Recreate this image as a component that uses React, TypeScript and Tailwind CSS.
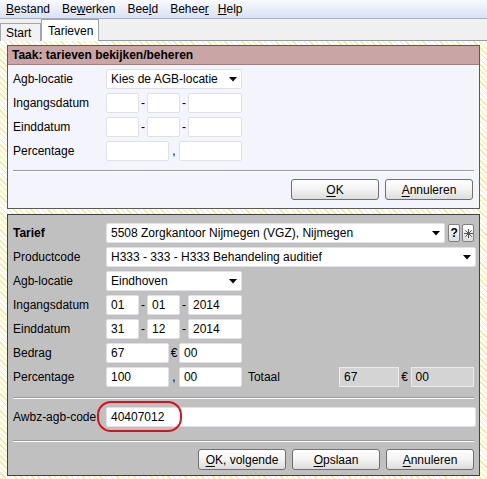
import React from "react";

const TB =
  "h-[20px] bg-white border border-[#e0e0e6] rounded-[2px] pl-[4px] flex items-center shrink-0 leading-none";

function Arrow() {
  return (
    <svg width="8" height="5" viewBox="0 0 8 5" className="shrink-0">
      <path d="M0 0 H8 L4 4.5 Z" fill="#000" />
    </svg>
  );
}

function Select({ w, text }: { w: string; text: string }) {
  return (
    <div className={`${TB} ${w} justify-between pr-[4px]`}>
      <span className="whitespace-nowrap">{text}</span>
      <Arrow />
    </div>
  );
}

function Row({ label, bold, children }: { label: string; bold?: boolean; children?: React.ReactNode }) {
  return (
    <div className="flex items-center h-[20px]">
      <div className={`w-[93px] shrink-0 ${bold ? "font-bold" : ""}`}>{label}</div>
      {children}
    </div>
  );
}

function DateInputs({ a = "", b = "", c = "" }: { a?: string; b?: string; c?: string }) {
  return (
    <div className="flex items-center">
      <div className={`${TB} w-[33px]`}>{a}</div>
      <div className="w-[8px] text-center">-</div>
      <div className={`${TB} w-[33px]`}>{b}</div>
      <div className="w-[8px] text-center">-</div>
      <div className={`${TB} w-[54px]`}>{c}</div>
    </div>
  );
}

function Btn({ w, first, rest }: { w: string; first: string; rest: string }) {
  return (
    <div
      className={`${w} h-[21px] rounded-[3px] border border-[#707070] bg-gradient-to-b from-[#ffffff] via-[#f3f3f3] to-[#dcdcdc] flex items-center justify-center leading-none`}
    >
      <span>
        <span className="underline underline-offset-2">{first}</span>
        {rest}
      </span>
    </div>
  );
}

function Sep() {
  return <div className="border-t border-[#9a9a9a] border-b border-b-white mx-[0px]" />;
}

export default function App() {
  return (
    <div className="relative w-[487px] h-[479px] overflow-hidden text-[12px] text-black font-['Liberation_Sans',Arial,sans-serif] flex flex-col">
      {/* Menu bar */}
      <div className="h-[19px] shrink-0 flex items-center pl-[6px] gap-[12px] bg-gradient-to-b from-[#f8fafd] to-[#d9e2f3] border-b border-[#a8b0bc]">
        <span><span className="underline">B</span>estand</span>
        <span>Be<span className="underline">w</span>erken</span>
        <span>Bee<span className="underline">l</span>d</span>
        <span>Behee<span className="underline">r</span></span>
        <span className="ml-[-3px]"><span className="underline">H</span>elp</span>
      </div>
      {/* Tabs */}
      <div className="h-[22px] shrink-0 bg-[#f0f0f0] border-b border-[#8e9aa6] flex items-end">
        <div className="w-[41px] h-[18px] border border-b-0 border-[#a0a8b0] bg-[#f2f2f2] pl-[5px] flex items-center -mb-px">
          Start
        </div>
        <div className="w-[58px] h-[22px] border border-b-0 border-[#9aa2aa] bg-white pl-[6px] flex items-start pt-[2px] -mb-px relative z-10">
          Tarieven
        </div>
      </div>
      {/* Hatched area */}
      <div className="flex-1 px-[7px] pt-[4px] bg-[repeating-linear-gradient(45deg,#efe9a2_0px,#efe9a2_1px,#fffff6_1px,#fffff6_4px)]">
        {/* Top panel */}
        <div className="h-[164px] border border-[#5a5a5a] bg-[#f4f4fc] flex flex-col">
          <div className="h-[19px] shrink-0 bg-[#c9a5a5] border-b border-[#9a8080] font-bold pl-[4px] flex items-center">
            Taak: tarieven bekijken/beheren
          </div>
          <div className="px-[5px] pt-[4px] flex flex-col">
            <div className="flex flex-col gap-[4px]">
              <Row label="Agb-locatie">
                <Select w="w-[136px]" text="Kies de AGB-locatie" />
              </Row>
              <Row label="Ingangsdatum">
                <DateInputs />
              </Row>
              <Row label="Einddatum">
                <DateInputs />
              </Row>
              <Row label="Percentage">
                <div className={`${TB} w-[63px]`} />
                <div className="w-[10px] text-center">,</div>
                <div className={`${TB} w-[63px]`} />
              </Row>
            </div>
            <div className="mt-[9px]">
              <Sep />
            </div>
            <div className="mt-[7px] flex justify-end gap-[6px] pr-[1px]">
              <Btn w="w-[88px]" first="O" rest="K" />
              <Btn w="w-[88px]" first="A" rest="nnuleren" />
            </div>
          </div>
        </div>
        {/* Bottom panel */}
        <div className="mt-[5px] h-[262px] border border-[#404040] bg-[#c0c0c0] px-[5px] pt-[8px] flex flex-col">
          <div className="flex flex-col gap-[4px]">
            <Row label="Tarief" bold>
              <Select w="w-[339px]" text="5508 Zorgkantoor Nijmegen (VGZ), Nijmegen" />
              <div className="ml-[3px] w-[15px] h-[18px] rounded-[2px] border border-[#808080] bg-gradient-to-b from-white to-[#dcdcdc] flex items-center justify-center font-bold text-[12px] leading-none">
                ?
              </div>
              <div className="ml-[2px] w-[14px] h-[18px] rounded-[2px] border border-[#808080] bg-gradient-to-b from-white to-[#dcdcdc] flex items-center justify-center">
                <svg width="9" height="9" viewBox="0 0 9 9">
                  <g stroke="#555" strokeWidth="1">
                    <line x1="4.5" y1="0" x2="4.5" y2="9" />
                    <line x1="0" y1="4.5" x2="9" y2="4.5" />
                    <line x1="1.3" y1="1.3" x2="7.7" y2="7.7" />
                    <line x1="7.7" y1="1.3" x2="1.3" y2="7.7" />
                  </g>
                </svg>
              </div>
            </Row>
            <Row label="Productcode">
              <Select w="w-[370px]" text="H333 - 333 - H333 Behandeling auditief" />
            </Row>
            <Row label="Agb-locatie">
              <Select w="w-[136px]" text="Eindhoven" />
            </Row>
            <Row label="Ingangsdatum">
              <DateInputs a="01" b="01" c="2014" />
            </Row>
            <Row label="Einddatum">
              <DateInputs a="31" b="12" c="2014" />
            </Row>
            <Row label="Bedrag">
              <div className={`${TB} w-[63px]`}>67</div>
              <div className="w-[10px] text-center">€</div>
              <div className={`${TB} w-[63px]`}>00</div>
            </Row>
            <Row label="Percentage">
              <div className={`${TB} w-[63px]`}>100</div>
              <div className="w-[10px] text-center">,</div>
              <div className={`${TB} w-[63px] border-[#8ea2ba]`}>00</div>
              <div className="w-[98px] pl-[6px]">Totaal</div>
              <div className="h-[20px] w-[60px] bg-[#d4d4d4] border border-[#ececec] pl-[4px] flex items-center">67</div>
              <div className="w-[12px] text-center">€</div>
              <div className="h-[20px] w-[64px] bg-[#d4d4d4] border border-[#ececec] pl-[4px] flex items-center">00</div>
            </Row>
          </div>
          <div className="mt-[10px]">
            <Sep />
          </div>
          <div className="mt-[8px]">
            <Row label="Awbz-agb-code">
              <div className={`${TB} w-[370px]`}>40407012</div>
            </Row>
          </div>
          <div className="mt-[13px]">
            <Sep />
          </div>
          <div className="mt-[7px] flex justify-end gap-[6px] pr-[0px]">
            <Btn w="w-[88px]" first="O" rest="K, volgende" />
            <Btn w="w-[88px]" first="O" rest="pslaan" />
            <Btn w="w-[88px]" first="A" rest="nnuleren" />
          </div>
        </div>
      </div>
      {/* Red annotation */}
      <div className="absolute left-[97px] top-[401px] w-[85px] h-[31px] border-2 border-[#d4141c] rounded-[14px]" />
    </div>
  );
}
